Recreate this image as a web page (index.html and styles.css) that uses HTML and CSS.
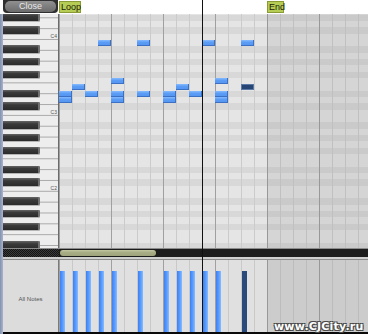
FILE: index.html
```html
<!DOCTYPE html>
<html>
<head>
<meta charset="utf-8">
<title>Piano Roll</title>
<link rel="stylesheet" href="styles.css">
</head>
<body>
<div class="app">
  <div class="topbar">
    <div class="close"><span>Close</span></div>
    <div class="marker loop">Loop</div>
    <div class="marker end">End</div>
  </div>
  <div class="body">
    <div class="stripe"></div>
    <div class="content">
      <div class="main">
        <div class="keyboard">
          <div class="kr"><i class="bk"></i></div>
          <div class="kr"></div>
          <div class="kr"><i class="bk"></i></div>
          <div class="kr"><span class="cl">C4</span></div>
          <div class="kr"></div>
          <div class="kr"><i class="bk"></i></div>
          <div class="kr"></div>
          <div class="kr"><i class="bk"></i></div>
          <div class="kr"></div>
          <div class="kr"><i class="bk"></i></div>
          <div class="kr"></div>
          <div class="kr"></div>
          <div class="kr"><i class="bk"></i></div>
          <div class="kr"></div>
          <div class="kr"><i class="bk"></i></div>
          <div class="kr"><span class="cl">C3</span></div>
          <div class="kr"></div>
          <div class="kr"><i class="bk"></i></div>
          <div class="kr"></div>
          <div class="kr"><i class="bk"></i></div>
          <div class="kr"></div>
          <div class="kr"><i class="bk"></i></div>
          <div class="kr"></div>
          <div class="kr"></div>
          <div class="kr"><i class="bk"></i></div>
          <div class="kr"></div>
          <div class="kr"><i class="bk"></i></div>
          <div class="kr"><span class="cl">C2</span></div>
          <div class="kr"></div>
          <div class="kr"><i class="bk"></i></div>
          <div class="kr"></div>
          <div class="kr"><i class="bk"></i></div>
          <div class="kr"></div>
          <div class="kr"><i class="bk"></i></div>
          <div class="kr"></div>
          <div class="kr"></div>
          <div class="kr"><i class="bk"></i></div>
        </div>
        <div class="roll">
          <div class="roll-loop">
            <div class="note" style="grid-column:4;grid-row:5"></div>
            <div class="note" style="grid-column:7;grid-row:5"></div>
            <div class="note" style="grid-column:12;grid-row:5"></div>
            <div class="note" style="grid-column:15;grid-row:5"></div>
            <div class="note" style="grid-column:5;grid-row:11"></div>
            <div class="note" style="grid-column:13;grid-row:11"></div>
            <div class="note" style="grid-column:2;grid-row:12"></div>
            <div class="note" style="grid-column:10;grid-row:12"></div>
            <div class="note sel" style="grid-column:15;grid-row:12"></div>
            <div class="note" style="grid-column:1;grid-row:13"></div>
            <div class="note" style="grid-column:3;grid-row:13"></div>
            <div class="note" style="grid-column:5;grid-row:13"></div>
            <div class="note" style="grid-column:7;grid-row:13"></div>
            <div class="note" style="grid-column:9;grid-row:13"></div>
            <div class="note" style="grid-column:11;grid-row:13"></div>
            <div class="note" style="grid-column:13;grid-row:13"></div>
            <div class="note" style="grid-column:1;grid-row:14"></div>
            <div class="note" style="grid-column:5;grid-row:14"></div>
            <div class="note" style="grid-column:9;grid-row:14"></div>
            <div class="note" style="grid-column:13;grid-row:14"></div>
          </div>
          <div class="roll-out"></div>
        </div>
      </div>
      <div class="scroll">
        <div class="dots"></div>
        <div class="thumb"></div>
      </div>
      <div class="sep"></div>
      <div class="velo">
        <div class="vlabel">All Notes</div>
        <div class="vloop">
          <div class="vcell"><i class="bar"></i></div>
          <div class="vcell"><i class="bar"></i></div>
          <div class="vcell"><i class="bar"></i></div>
          <div class="vcell"><i class="bar"></i></div>
          <div class="vcell"><i class="bar"></i></div>
          <div class="vcell"></div>
          <div class="vcell"><i class="bar"></i></div>
          <div class="vcell"></div>
          <div class="vcell"><i class="bar"></i></div>
          <div class="vcell"><i class="bar"></i></div>
          <div class="vcell"><i class="bar"></i></div>
          <div class="vcell"><i class="bar"></i></div>
          <div class="vcell"><i class="bar"></i></div>
          <div class="vcell"></div>
          <div class="vcell"><i class="bar sel"></i></div>
          <div class="vcell"></div>
        </div>
        <div class="vout"></div>
      </div>
      <div class="foot"></div>
    </div>
  </div>
  <div class="playhead"></div>
  <div class="watermark">www.CJCity.ru</div>
</div>
</body>
</html>
```

FILE: styles.css
```css
* { box-sizing: border-box; margin: 0; padding: 0; }

html, body {
  width: 368px;
  height: 334px;
  overflow: hidden;
  background: #ffffff;
}

body {
  font-family: "Liberation Sans", Arial, sans-serif;
}

.app {
  position: relative;
  width: 368px;
  height: 334px;
  display: flex;
  flex-direction: column;
}

/* ---------- top bar ---------- */
.topbar {
  height: 14px;
  flex: 0 0 14px;
  display: flex;
  align-items: flex-start;
  background: #ffffff;
}

.close {
  margin-left: 3px;
  width: 55px;
  height: 13px;
  padding: 1px 2px;
  background: #2f2f2f;
  border-radius: 0 0 4px 4px;
}

.close span {
  display: block;
  height: 11px;
  border-radius: 5px;
  background: linear-gradient(#909090, #6c6c6c);
  color: #e8e8e8;
  font-size: 9px;
  line-height: 11px;
  text-align: center;
}

.marker {
  height: 12px;
  margin-top: 1px;
  padding-left: 1px;
  background: #b6cd55;
  border: 1px solid #8a9b35;
  color: #1d2208;
  font-size: 9px;
  line-height: 10px;
}

.loop { margin-left: 1px; width: 22px; }
.end { margin-left: 186px; width: 17px; }

/* ---------- body ---------- */
.body {
  flex: 1;
  display: flex;
}

.stripe {
  width: 3px;
  flex: 0 0 3px;
  background: linear-gradient(to right, #8190af, #aab5cb);
}

.content {
  flex: 1;
  display: flex;
  flex-direction: column;
}

.main {
  height: 234px;
  flex: 0 0 234px;
  display: flex;
  overflow: hidden;
}

/* ---------- keyboard ---------- */
.keyboard {
  width: 56px;
  flex: 0 0 56px;
  border-right: 1px solid #6b6b6b;
  display: flex;
  flex-direction: column;
  overflow: hidden;
  background:
    linear-gradient(to bottom, #ededed 9.857px, #a9a9a9 9.857px) 0 4.286px / 100% 10.857px repeat-y,
    #ededed;
}

.kr {
  flex: 0 0 6.3333px;
  height: 6.3333px;
  display: flex;
  align-items: flex-start;
}

.kr:first-child {
  flex-basis: 7px;
  height: 7px;
}

.bk {
  display: block;
  width: 37px;
  height: 7.5px;
  margin-top: -1px;
  background: linear-gradient(#666666, #3a3a3a 35%, #2b2b2b);
  border-right: 2px solid #707070;
  border-radius: 0 1px 1px 0;
  box-shadow: 0 1px 0 #b5b5b5;
}

.cl {
  margin-left: auto;
  margin-right: 1px;
  margin-top: -1px;
  font-size: 5px;
  line-height: 7px;
  color: #555;
}

/* ---------- roll grid ---------- */
.roll {
  flex: 1;
  display: flex;
}

.roll-loop {
  width: 208px;
  flex: 0 0 208px;
  display: grid;
  grid-template-columns: repeat(16, 13px);
  grid-template-rows: 7px repeat(36, 6.3333px);
  overflow: hidden;
  background:
    linear-gradient(to right, #a0a0a0 1px, transparent 1px) 0 0 / 52px 100%,
    linear-gradient(to right, #cbcbcb 1px, transparent 1px) 0 0 / 13px 100%,
    linear-gradient(to bottom,
      #e5e5e5 6.333px, #d8d8d8 6.333px 12.667px,
      #e5e5e5 12.667px 19px, #d8d8d8 19px 25.333px,
      #e5e5e5 25.333px 31.667px, #d8d8d8 31.667px 38px,
      #e5e5e5 38px 50.667px, #d8d8d8 50.667px 57px,
      #e5e5e5 57px 63.333px, #d8d8d8 63.333px 69.667px,
      #e5e5e5 69.667px) 0 26px / 100% 76px;
}

.roll-out {
  flex: 1;
  background:
    linear-gradient(to right, #989898 1px, transparent 1px) 0 0 / 52px 100%,
    linear-gradient(to right, #c0c0c0 1px, transparent 1px) 0 0 / 13px 100%,
    linear-gradient(to bottom,
      #d5d5d5 6.333px, #cacaca 6.333px 12.667px,
      #d5d5d5 12.667px 19px, #cacaca 19px 25.333px,
      #d5d5d5 25.333px 31.667px, #cacaca 31.667px 38px,
      #d5d5d5 38px 50.667px, #cacaca 50.667px 57px,
      #d5d5d5 57px 63.333px, #cacaca 63.333px 69.667px,
      #d5d5d5 69.667px) 0 26px / 100% 76px;
}

.note {
  align-self: start;
  height: 6px;
  background: linear-gradient(#86bbff, #5b9cf5 40%, #5294f0);
  box-shadow: inset -1px -1px 0 #3b70c4;
}

.note.sel {
  background: #274574;
  box-shadow: inset 0 0 0 1px #5a78a6;
}

/* ---------- scroll bar ---------- */
.scroll {
  height: 9px;
  flex: 0 0 9px;
  border-top: 1px solid #8c8c8c;
  background: #1c1c1c;
  display: flex;
  align-items: center;
}

.dots {
  width: 56px;
  height: 8px;
  background-color: #141414;
  background-image:
    linear-gradient(45deg, #3a3a3a 25%, transparent 25%, transparent 75%, #3a3a3a 75%),
    linear-gradient(45deg, #3a3a3a 25%, transparent 25%, transparent 75%, #3a3a3a 75%);
  background-size: 2px 2px;
  background-position: 0 0, 1px 1px;
}

.thumb {
  margin-left: 1px;
  width: 96px;
  height: 6px;
  border-radius: 3px;
  background: linear-gradient(#c4c8a2, #a9ad85 40%, #9fa37b);
}

.sep {
  height: 3px;
  flex: 0 0 3px;
  background: #cfcfcf;
  border-bottom: 1px solid #8d8d8d;
}

/* ---------- velocity ---------- */
.velo {
  height: 72px;
  flex: 0 0 72px;
  display: flex;
}

.vlabel {
  width: 56px;
  flex: 0 0 56px;
  border-right: 1px solid #7a7a7a;
  background: #dcdcdc;
  color: #555;
  font-size: 6px;
  display: flex;
  align-items: center;
  justify-content: center;
  padding-top: 6px;
}

.vloop {
  width: 208px;
  flex: 0 0 208px;
  display: grid;
  grid-template-columns: repeat(16, 13px);
  background:
    linear-gradient(to right, #a0a0a0 1px, transparent 1px) 0 0 / 52px 100%,
    linear-gradient(to right, #c9c9c9 1px, transparent 1px) 0 0 / 13px 100%,
    #e0e0e0;
}

.vcell {
  display: flex;
  align-items: flex-end;
}

.bar {
  display: block;
  margin-left: 1px;
  width: 5px;
  height: 61px;
  background: linear-gradient(to right, #3d80f0, #5a9cff 55%, #88bcff);
}

.bar.sel {
  background: #2a4a7c;
}

.vout {
  flex: 1;
  background:
    linear-gradient(to right, #989898 1px, transparent 1px) 0 0 / 52px 100%,
    linear-gradient(to right, #bcbcbc 1px, transparent 1px) 0 0 / 13px 100%,
    #cccccc;
}

.foot {
  height: 2px;
  flex: 0 0 2px;
  background: #0a0a0a;
}

/* ---------- overlays ---------- */
.playhead {
  position: absolute;
  left: 202px;
  top: 0;
  width: 1px;
  height: 332px;
  background: #111;
}

.watermark {
  position: absolute;
  left: 274px;
  top: 321px;
  font-family: "DejaVu Sans", sans-serif;
  font-weight: bold;
  font-size: 11px;
  line-height: 12px;
  letter-spacing: 0.2px;
  color: #ffffff;
  white-space: nowrap;
  text-shadow: 1px 1px 0 #4a4a4a, -1px -1px 0 #4a4a4a, 1px -1px 0 #4a4a4a, -1px 1px 0 #4a4a4a;
}
```
